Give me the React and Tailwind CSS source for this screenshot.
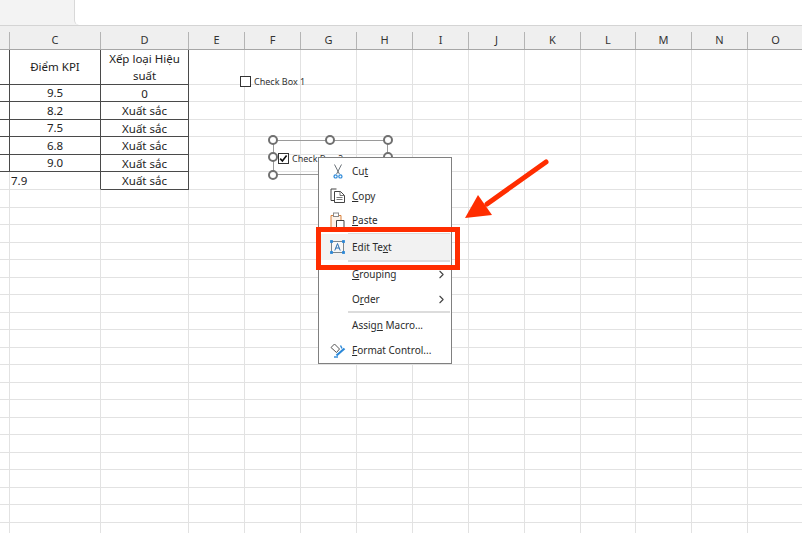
import React from "react";
import { ChevronRight } from "lucide-react";

const colWidths = [10, 91, 88, 56, 56, 56, 56, 56, 56, 56, 55, 56, 56, 56, 55];
const headers = ["", "C", "D", "E", "F", "G", "H", "I", "J", "K", "L", "M", "N", "O", ""];

const tableRows = [
  { h: "h-[35px]", c: "Điểm KPI", d: ["Xếp loại Hiệu", "suất"] },
  { h: "h-[17px]", c: "9.5", d: ["0"] },
  { h: "h-[18px]", c: "8.2", d: ["Xuất sắc"] },
  { h: "h-[17px]", c: "7.5", d: ["Xuất sắc"] },
  { h: "h-[18px]", c: "6.8", d: ["Xuất sắc"] },
  { h: "h-[17px]", c: "9.0", d: ["Xuất sắc"] },
];

const emptyHeights = [
  "h-[18px]", "h-[17px]", "h-[18px]", "h-[17px]", "h-[18px]", "h-[17px]", "h-[18px]", "h-[17px]", "h-[18px]",
  "h-[17px]", "h-[18px]", "h-[17px]", "h-[18px]", "h-[17px]", "h-[18px]", "h-[17px]", "h-[18px]", "h-[17px]",
  "h-[18px]", "h-[17px]", "h-[18px]",
];

const light = "border-r border-b border-[#e2e2e2]";
const dark = "border-r border-b border-[#4a4a4a]";

const ScissorsIcon = () => (
  <svg width="10" height="15" viewBox="0 0 10 15" fill="none">
    <path d="M1.5 0.5L6.4 10M8.5 0.5L3.6 10" stroke="#6b7278" strokeWidth="1" />
    <circle cx="2.6" cy="12.4" r="1.6" stroke="#2b88d8" strokeWidth="1.2" />
    <circle cx="7.4" cy="12.4" r="1.6" stroke="#2b88d8" strokeWidth="1.2" />
  </svg>
);

const CopyIcon = () => (
  <svg width="16" height="16" viewBox="0 0 16 16" fill="none">
    <path d="M6.5 1H1v11.5h3" stroke="#444" strokeWidth="1" />
    <path d="M4.5 3.5h6L14.5 7.5v7h-10z" fill="#fff" stroke="#444" strokeWidth="1" />
    <path d="M10 3.5v4h4.5M6.5 9.5h6M6.5 11.5h6" stroke="#666" strokeWidth="0.9" />
  </svg>
);

const PasteIcon = () => (
  <svg width="15" height="18" viewBox="0 0 15 18" fill="none">
    <path d="M1 3.5h10v13H1z" fill="#fdf3ea" stroke="#d9823f" />
    <rect x="3.5" y="1" width="5" height="3.5" fill="#fff" stroke="#8a8a8a" />
    <path d="M6.5 8.5h7.5v9H6.5z" fill="#fff" stroke="#444" />
  </svg>
);

const EditTextIcon = () => (
  <svg width="15" height="14" viewBox="0 0 15 14" fill="none">
    <rect x="1.5" y="1.5" width="12" height="11" fill="#f7f7f7" stroke="#5f6b73" strokeWidth="0.8" />
    {[[1.5, 1.5], [13.5, 1.5], [1.5, 12.5], [13.5, 12.5]].map(([x, y]) => (
      <rect key={`${x}-${y}`} x={x - 1.4} y={y - 1.4} width="2.8" height="2.8" fill="#2b88d8" />
    ))}
    <path d="M4.8 10.5L7.5 3.5l2.7 7M5.8 8h3.4" stroke="#2b6fb0" strokeWidth="1" />
  </svg>
);

const FormatIcon = () => (
  <svg width="16" height="15" viewBox="0 0 16 15" fill="none">
    <path d="M1 4.5L4.5 1l5 5-3 3.5z" fill="#fff" stroke="#555" />
    <path d="M10.5 2.5l1.5 3" stroke="#2b88d8" strokeWidth="1.4" />
    <path d="M6.5 12.5L14.5 5.5" stroke="#2b88d8" strokeWidth="2.2" />
    <path d="M4 14h4" stroke="#2b88d8" strokeWidth="1.4" />
  </svg>
);

const menuItems = [
  { key: "cut", icon: <ScissorsIcon />, label: <>Cu<u>t</u></>, h: "h-[25px]" },
  { key: "copy", icon: <CopyIcon />, label: <><u>C</u>opy</>, h: "h-[24px]" },
  { key: "paste", icon: <PasteIcon />, label: <><u>P</u>aste</>, h: "h-[25px]" },
  { sep: "h-[1px]" },
  { key: "edit", icon: <EditTextIcon />, label: <>Edit Te<u>x</u>t</>, h: "h-[26px]", active: true },
  { sep: "h-[2px]" },
  { key: "group", label: <><u>G</u>rouping</>, h: "h-[25px]", arrow: true },
  { key: "order", label: <>O<u>r</u>der</>, h: "h-[24px]", arrow: true },
  { sep: "h-[2px]" },
  { key: "macro", label: <>Assig<u>n</u> Macro...</>, h: "h-[25px]" },
  { key: "format", icon: <FormatIcon />, label: <><u>F</u>ormat Control...</>, h: "h-[25px]" },
];

const ContextMenu = () => (
  <div className="absolute left-[318px] top-[157px] w-[134px] h-[207px] bg-white border border-[#808080] pt-[1px] text-[10px] text-[#2b2b2b]">
    {menuItems.map((item, i) =>
      item.sep ? (
        <div key={i} className={`ml-[29px] mr-[1px] bg-[#dcdcdc] ${item.sep}`}></div>
      ) : (
        <div key={item.key} className={`flex items-center ${item.h} ${item.active ? "bg-[#f2f2f2]" : ""}`}>
          <div className="w-[33px] shrink-0 flex items-center justify-center pl-[4px]">{item.icon}</div>
          <span>{item.label}</span>
          {item.arrow && <ChevronRight className="ml-auto mr-[3px] text-[#444]" size={13} />}
        </div>
      )
    )}
  </div>
);

const Handle = ({ pos }) => (
  <div className={`absolute w-[10px] h-[10px] rounded-full bg-white border-2 border-[#707070] ${pos}`}></div>
);

const CheckBoxes = () => (
  <>
    <div className="absolute left-[240px] top-[76px] flex items-center gap-[3px] text-[9px] leading-[11px] text-[#333]">
      <div className="w-[11px] h-[11px] border border-[#333] bg-white"></div>
      <span>Check Box 1</span>
    </div>
    <div className="absolute left-[273px] top-[140px] w-[115px] h-[35px] border border-[#9a9a9a]"></div>
    <Handle pos="left-[268px] top-[135px]" />
    <Handle pos="left-[325px] top-[135px]" />
    <Handle pos="left-[383px] top-[135px]" />
    <Handle pos="left-[268px] top-[152px]" />
    <Handle pos="left-[383px] top-[152px]" />
    <Handle pos="left-[268px] top-[170px]" />
    <div className="absolute left-[278px] top-[153px] flex items-center gap-[3px] text-[9px] leading-[11px] text-[#333]">
      <div className="w-[11px] h-[11px] border border-[#333] bg-white flex items-center justify-center">
        <svg width="9" height="9" viewBox="0 0 9 9" fill="none">
          <path d="M1.2 4.6l2.2 2.4 4.2-5.4" stroke="#111" strokeWidth="1.6" />
        </svg>
      </div>
      <span>Check Box 2</span>
    </div>
  </>
);

const Arrow = () => (
  <svg className="absolute left-[460px] top-[155px]" width="92" height="68" viewBox="0 0 92 68" fill="none">
    <path d="M86 7L27 49" stroke="#ff2d00" strokeWidth="5" strokeLinecap="round" />
    <path d="M5 63L18 40L32 60z" fill="#ff2d00" />
  </svg>
);

export default function App() {
  return (
    <div className="relative w-[802px] h-[533px] overflow-hidden bg-white font-['Noto_Sans',sans-serif]">
      {/* Formula bar */}
      <div className="flex h-[26px] bg-[#f3f3f3] border-b border-[#d4d4d4]">
        <div className="w-[74px] shrink-0"></div>
        <div className="flex-1 bg-white border-l border-[#d8d8d8] rounded-bl-[5px]"></div>
      </div>

      {/* Column headers */}
      <div className="flex h-[24px] pt-[6px] bg-[#efefef] border-b border-[#a6a6a6] text-[11px] text-[#333]">
        {colWidths.map((w, i) => (
          <div
            key={i}
            style={{ width: w }}
            className="shrink-0 border-r border-[#b4b4b4] flex items-center justify-center"
          >
            {headers[i]}
          </div>
        ))}
      </div>

      {/* Cells */}
      <div className="text-[11.5px] text-[#222]">
        {tableRows.map((row, i) => (
          <div key={i} className={`flex ${row.h}`}>
            <div className={`w-[10px] shrink-0 ${dark}`}></div>
            <div className={`w-[91px] shrink-0 ${dark} flex items-center justify-center`}>{row.c}</div>
            <div className={`w-[88px] shrink-0 ${dark} flex flex-col items-center justify-center leading-[17px]`}>
              {row.d.map((line) => (
                <span key={line}>{line}</span>
              ))}
            </div>
            {colWidths.slice(3).map((w, j) => (
              <div key={j} style={{ width: w }} className={`shrink-0 ${light}`}></div>
            ))}
          </div>
        ))}
        <div className="flex h-[18px]">
          <div className={`w-[10px] shrink-0 ${light}`}></div>
          <div className="w-[91px] shrink-0 border-r border-[#4a4a4a] border-b border-b-[#e2e2e2] pl-[1px] pt-[1px] flex items-center">7.9</div>
          <div className={`w-[88px] shrink-0 ${dark} pt-[1px] flex items-center justify-center`}>Xuất sắc</div>
          {colWidths.slice(3).map((w, j) => (
            <div key={j} style={{ width: w }} className={`shrink-0 ${light}`}></div>
          ))}
        </div>
        {emptyHeights.map((h, i) => (
          <div key={i} className={`flex ${h}`}>
            {colWidths.map((w, j) => (
              <div key={j} style={{ width: w }} className={`shrink-0 ${light}`}></div>
            ))}
          </div>
        ))}
      </div>

      <CheckBoxes />
      <ContextMenu />
      <div className="absolute left-[316px] top-[227px] w-[144px] h-[43px] border-[5px] border-[#ff2d00]"></div>
      <Arrow />
    </div>
  );
}
